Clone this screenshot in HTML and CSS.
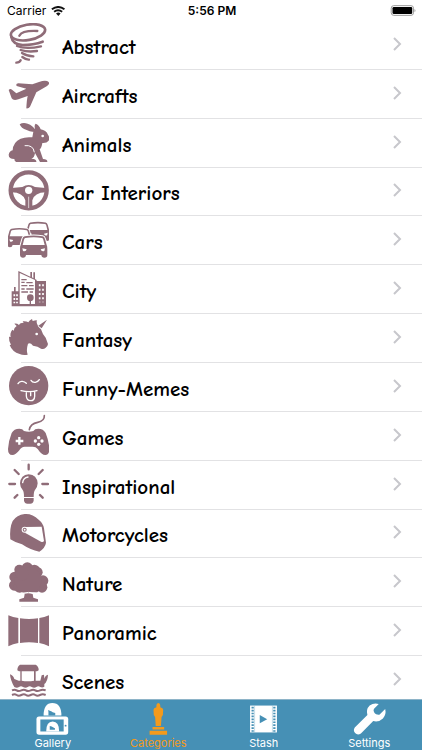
FILE: index.html
```html
<!DOCTYPE html>
<html lang="en">
<head>
<meta charset="utf-8">
<meta name="viewport" content="width=device-width, initial-scale=1">
<title>Categories</title>
<link rel="stylesheet" href="styles.css">
</head>
<body>
<header class="status">
  <div class="status-left"><span>Carrier</span>
    <svg class="wifi" viewBox="153 16 42 31" aria-hidden="true"><g fill="none" stroke="#111" stroke-width="6"><path d="M155 26q20-14 39 0"/><path d="M162 34q12-9 25 0"/></g><path fill="#111" d="M168 39q7-5 14 0l-7 8z"/></svg>
  </div>
  <div class="status-time">5:56 PM</div>
  <div class="status-right">
    <svg class="battery" viewBox="326 14 80 34" aria-hidden="true"><rect x="328" y="16" width="69" height="30" rx="8" fill="none" stroke="#999" stroke-width="3"/><rect x="332" y="20" width="61" height="22" rx="4"/><path d="M400 26q6 5 0 10z" fill="#999"/></svg>
  </div>
</header>
<main class="content">
<ul class="list">
  <li><a class="row" href="#abstract">
    <svg class="icon" viewBox="24 70 123 123"><g fill="none" stroke="currentColor" stroke-linecap="round"><ellipse cx="84" cy="98" rx="52" ry="23" transform="rotate(-10 84 98)" stroke-width="8"/><path d="M58 108q8-16 54-14" stroke-width="7"/><path d="M34 112q4 22 34 24 32 0 60-10" stroke-width="8"/><path d="M51 139q26 11 72 1M62 151q22 7 49 3M66 160q14 9 34 10M67 172q12 9 20 8M62 182q-3 7-13 7" stroke-width="7"/></g></svg>
    <span class="name">Abstract</span><svg class="chevron" viewBox="0 0 9 14"><path d="M1 1l6 6-6 6"/></svg></a></li>
  <li><a class="row" href="#aircrafts">
    <svg class="icon" viewBox="24 216 123 123"><path fill="currentColor" d="M26 270q5-5 10-1l13 11 30-14-29-8q-4-7 5-8l42 3 20-7q21-7 29 0 4 7-6 13l-31 18-19 43q-4 6-11 5 1-24 4-37l-28 10q-15 5-20-3z"/></svg>
    <span class="name">Aircrafts</span><svg class="chevron" viewBox="0 0 9 14"><path d="M1 1l6 6-6 6"/></svg></a></li>
  <li><a class="row" href="#animals">
    <svg class="icon" viewBox="24 9 123 123"><path fill="currentColor" d="M59 19q10-7 24-2 16 6 22 17-3-14 2-17 10 3 15 17 16 3 22 16 6 9 2 18-6 8-19 7-2 15-8 19l10 29q14 1 13 9h-22l-15-27q-2 15-11 17 16 0 15 10H49q-6-2-6-9-17 0-17-13 2-11 12-13 1-25 24-35 14-6 35-4l3-17q-9 1-20-5-17-5-21-17z"/><circle cx="128" cy="54" r="4" fill="#fff"/><path d="M74 83q26-3 29 20" fill="none" stroke="#fff" stroke-width="3"/></svg>
    <span class="name">Animals</span><svg class="chevron" viewBox="0 0 9 14"><path d="M1 1l6 6-6 6"/></svg></a></li>
  <li><a class="row" href="#car-interiors">
    <svg class="icon" viewBox="24 156 123 123"><circle cx="86" cy="217" r="54" fill="none" stroke="currentColor" stroke-width="13"/><path fill="currentColor" d="M35 210l32-3q19-12 38 0l32 3v13q-34 1-40 24v20H76v-20q-7-23-41-24z"/><circle cx="86" cy="217" r="11" fill="#fff"/><path d="M86 236v34" stroke="#fff" stroke-width="2"/></svg>
    <span class="name">Car Interiors</span><svg class="chevron" viewBox="0 0 9 14"><path d="M1 1l6 6-6 6"/></svg></a></li>
  <li><a class="row" href="#cars">
    <svg class="icon" viewBox="24 8 123 123"><defs><g id="car"><path class="car-body" d="M74 60q27-5 54 0 5 1 7 8l5 18q2 3 2 12v18q0 8-9 8-8 0-9-8H78q-1 8-9 8t-9-8V98q0-9 2-12l5-18q2-7 7-8z"/><path fill="#fff" d="M76 65q25-4 50 0 3 1 4 5l4 16H68l4-16q1-4 4-5z"/><path fill="#fff" d="M67 96l13 3q-2 8-11 5zM135 96l-13 3q2 8 11 5z"/></g></defs><g transform="translate(27 -33) scale(.86)"><use href="#car"/></g><g transform="translate(-30 -15) scale(.87)"><use href="#car"/></g><use href="#car"/></svg>
    <span class="name">Cars</span><svg class="chevron" viewBox="0 0 9 14"><path d="M1 1l6 6-6 6"/></svg></a></li>
  <li><a class="row" href="#city">
    <svg class="icon" viewBox="24 155 123 123"><path fill="currentColor" d="M35 225h7v-13h5v13h8v-61l36 17v-14h5v16l4 3v-18h5v20l5 3v3h28v76H35z"/><path fill="#fff" d="M59 170l46 21v72H59z"/><path stroke="currentColor" stroke-width="4" d="M64 190h16M64 198h10M79 199h19M64 208h18M87 208h14M64 218h10M79 218h22M64 227h20M89 227h10M91 240v25"/><circle cx="91" cy="244" r="10" fill="currentColor"/><path stroke="#fff" stroke-width="5" stroke-dasharray="6 7" d="M119 204v54M129 204v54"/><path stroke="#fff" stroke-width="5" stroke-dasharray="6 5" d="M43 234v27M51 234v27"/></svg>
    <span class="name">City</span><svg class="chevron" viewBox="0 0 9 14"><path d="M1 1l6 6-6 6"/></svg></a></li>
  <li><a class="row" href="#fantasy">
    <svg class="icon" viewBox="24 7 123 123"><path fill="currentColor" d="M141 15l-16 26-10-8zM110 16q-2 10 5 20l8 8q4 14 14 25l7 19q-1 8-7 11-6 6-14 3-9-8-24-9-8-10-15-6-6 20-1 33-15 2-24-2-22-6-30-27l4-1q-7-11-6-24l5 1q-3-12 5-22l4 3q1-9 9-14l-7-7q8-1 14 4 3-7 14-7l-3-4q11-1 17 3 3-6 11-10l2 6q5-2 15-3z"/><circle cx="110" cy="58" r="4" fill="#fff"/></svg>
    <span class="name">Fantasy</span><svg class="chevron" viewBox="0 0 9 14"><path d="M1 1l6 6-6 6"/></svg></a></li>
  <li><a class="row" href="#funny-memes">
    <svg class="icon" viewBox="24 154 123 123"><circle cx="86" cy="216" r="59" fill="currentColor"/><g fill="none" stroke="#fff" stroke-width="4" stroke-linecap="round"><path d="M54 210q4-8 13-7 7 1 12 6M93 200q4 7 13 6 8-1 12-8M63 231q25 6 48 0M79 234v13q1 14 13 14 11 0 12-13v-14M92 236v10"/></g></svg>
    <span class="name">Funny-Memes</span><svg class="chevron" viewBox="0 0 9 14"><path d="M1 1l6 6-6 6"/></svg></a></li>
  <li><a class="row" href="#games">
    <svg class="icon" viewBox="24 7 123 123"><path d="M133 12q1 16-20 20-22 4-25 22" fill="none" stroke="currentColor" stroke-width="5" stroke-linecap="round"/><path fill="currentColor" d="M35 64q7-13 23-13 10 0 14 7 14 4 28 0 4-7 15-7 15 0 22 13 10 25 11 48 0 18-12 18-11 0-23-18-5-7-15-7H74q-10 0-16 11-11 14-21 14-13 0-13-18 2-26 11-48z"/><path d="M58 76v23M47 88h23" stroke="#fff" stroke-width="7"/><g fill="#fff"><circle cx="116" cy="78" r="5"/><circle cx="116" cy="98" r="5"/><circle cx="106" cy="88" r="5"/><circle cx="126" cy="88" r="5"/></g></svg>
    <span class="name">Games</span><svg class="chevron" viewBox="0 0 9 14"><path d="M1 1l6 6-6 6"/></svg></a></li>
  <li><a class="row" href="#inspirational">
    <svg class="icon" viewBox="24 153 123 123"><path stroke="currentColor" stroke-width="7" stroke-linecap="round" d="M86 158v14M28 216h17M127 216h17M44 174l12 12M128 174l-12 12M44 257l8-8M128 257l-8-8"/><path fill="currentColor" d="M86 187q25 2 27 27 0 10-8 20-4 5-4 21H72q0-16-4-21-8-10-8-20 2-25 26-27zM72 258h29v8q-2 9-10 9h-9q-8 0-10-9z"/><path d="M68 212q2-15 16-17" fill="none" stroke="#fff" stroke-width="4" stroke-linecap="round"/></svg>
    <span class="name">Inspirational</span><svg class="chevron" viewBox="0 0 9 14"><path d="M1 1l6 6-6 6"/></svg></a></li>
  <li><a class="row" href="#motorcycles">
    <svg class="icon" viewBox="24 6 123 123"><path fill="currentColor" d="M31 88q-3-34 7-55 12-18 36-21 23-2 42 17 13 9 16 26l6 43q-2 15-20 27-27-5-52-22-20-5-35-15z"/><path fill="#fff" d="M77 51l48-1 7 43q-3 5-9 2L76 69z"/><circle cx="74" cy="59" r="9" fill="#fff"/><circle cx="74" cy="59" r="6" fill="currentColor"/><circle cx="74" cy="59" r="3" fill="#fff"/></svg>
    <span class="name">Motorcycles</span><svg class="chevron" viewBox="0 0 9 14"><path d="M1 1l6 6-6 6"/></svg></a></li>
  <li><a class="row" href="#nature">
    <svg class="icon" viewBox="24 152 123 123"><g fill="currentColor"><circle cx="82" cy="173" r="17"/><circle cx="58" cy="178" r="15"/><circle cx="103" cy="180" r="17"/><circle cx="44" cy="200" r="16"/><circle cx="43" cy="225" r="16"/><circle cx="112" cy="186" r="16"/><circle cx="129" cy="211" r="16"/><circle cx="126" cy="231" r="16"/><circle cx="59" cy="229" r="18"/><circle cx="105" cy="229" r="18"/><circle cx="84" cy="210" r="40"/><circle cx="67" cy="190" r="20"/><path d="M74 251h24l2 11 14 5v7H58v-7l14-5z"/></g><path d="M63 249q22-5 47-1" stroke="#fff" stroke-width="3" fill="none"/></svg>
    <span class="name">Nature</span><svg class="chevron" viewBox="0 0 9 14"><path d="M1 1l6 6-6 6"/></svg></a></li>
  <li><a class="row" href="#panoramic">
    <svg class="icon" viewBox="24 11 123 123"><path fill="currentColor" d="M25 27q14 6 30 8v75q-16 3-30 10zM60 36q27 4 54 0v74q-27-5-54 0zM118 35q15-2 29-8v93q-14-7-29-10z"/></svg>
    <span class="name">Panoramic</span><svg class="chevron" viewBox="0 0 9 14"><path d="M1 1l6 6-6 6"/></svg></a></li>
  <li><a class="row" href="#scenes">
    <svg class="icon" viewBox="24 157 123 123"><path fill="currentColor" d="M60 174h47q10 6 9 17l-5 3h-4v28h14l4-16 7-2 1 12q3-11 11-12-1 20-11 28v8q-6 4-12 1-6-4-12 0t-14 0q-6-4-12 0t-14 0q-6-4-12 0t-14 0q-12-20-13-38 10 3 13 14l13 5h5v-28h-4l-5-3q0-12 8-17z"/><path fill="#fff" d="M65 194h37v28q-19 4-37 0z"/><path d="M36 251q8-4 14 0t14 0 14 0 14 0 14 0 14 0 17 0M36 265q8-4 14 0t14 0 14 0 14 0 14 0 14 0 17 0" fill="none" stroke="currentColor" stroke-width="6"/></svg>
    <span class="name">Scenes</span><svg class="chevron" viewBox="0 0 9 14"><path d="M1 1l6 6-6 6"/></svg></a></li>
</ul>
</main>
<nav class="tabs">
  <a class="tab" href="#gallery"><svg class="tab-icon" viewBox="107 24 105 105"><path fill="currentColor" d="M132 66q0-39 27-39 28 0 28 39z"/><path fill="#4690b5" d="M147 66V55l-1-6 7 3 4 1 3 3 8 2v8z"/><rect x="110" y="69" width="98" height="56" rx="8" fill="currentColor"/><rect x="122" y="78" width="72" height="37" fill="#4690b5"/><path fill="currentColor" d="M140 115q0-31 20-31t20 31z"/><path fill="#4690b5" d="M151 110V98l6 2 4 2 6 3v5z"/><circle cx="200" cy="97" r="3" fill="#4690b5"/></svg><span>Gallery</span></a>
  <a class="tab active" href="#categories" aria-current="page"><svg class="tab-icon" viewBox="422 24 105 105"><path fill="currentColor" d="M468 35q0-8 6-8t6 8v5q9 2 9 8l-1 16-4 6-2 28h-16l-2-28-4-6-1-16q0-6 9-8zM456 101h36v8h-36zM447 113h54v12h-54z"/></svg><span>Categories</span></a>
  <a class="tab" href="#stash"><svg class="tab-icon" viewBox="106 22 105 105"><path fill="currentColor" d="M117 33h83v83h-83z"/><path fill="none" stroke="#4690b5" stroke-width="7" stroke-dasharray="5 4" d="M125 37v77M192 37v77"/><path fill="none" stroke="#4690b5" stroke-width="1" d="M131 34v81M186 34v81"/><path fill="#4690b5" d="M147 62l23 13-23 13z"/></svg><span>Stash</span></a>
  <a class="tab" href="#settings"><svg class="tab-icon" viewBox="422 23 105 105"><path fill="currentColor" d="M503 29q-15-5-28 5-12 12-7 29l-39 39q-6 9 1 17 8 8 18 1l38-38q18 4 30-8 11-12 7-29l-18 17q-11 1-15-5-5-7-2-12z"/></svg><span>Settings</span></a>
</nav>
</body>
</html>
```
FILE: styles.css
```css
* { box-sizing: border-box; }
body {
  margin: 0;
  height: 100vh;
  display: flex;
  flex-direction: column;
  background: #fff;
  color: #000;
  font-family: Inter, "Liberation Sans", sans-serif;
}
a { color: inherit; text-decoration: none; }
.status {
  flex: none;
  display: grid;
  grid-template-columns: 1fr auto 1fr;
  align-items: center;
  height: 21px;
  padding: 0 5px 0 7px;
  font-size: 12px;
}
.status-left { display: flex; align-items: center; gap: 5px; }
.status-time { font-weight: 600; }
.status-right { display: flex; justify-content: flex-end; }
.wifi { width: 14px; height: 10px; }
.battery { width: 27px; height: 11px; }
.content { flex: 1; min-height: 0; overflow: hidden; }
.list {
  display: grid;
  grid-auto-rows: 1fr;
  height: 684px;
  margin: 0;
  padding: 0;
  list-style: none;
}
.list li { position: relative; }
.row {
  display: flex;
  align-items: center;
  height: 100%;
  padding: 0 20px 3px 8px;
}
.row::after {
  content: "";
  position: absolute;
  left: 21px;
  right: 0;
  bottom: 0;
  height: 1px;
  background: #e2e2e4;
}
.icon { flex: none; width: 41px; height: 41px; color: #8f6c78; }
.car-body {
  fill: currentColor;
  stroke: #fff;
  stroke-width: 6;
  paint-order: stroke;
}
.name {
  flex: 1;
  padding: 6px 0 0 13px;
  font-family: "Chalkboard SE", "Comic Neue", Lato, sans-serif;
  font-size: 21px;
  font-weight: 600;
  line-height: 24px;
}
.chevron {
  width: 9px;
  height: 14px;
  fill: none;
  stroke: #c7c7cc;
  stroke-width: 2;
}
.tabs {
  flex: none;
  display: flex;
  height: 51px;
  background: #4690b5;
  border-top: 1px solid #8eb4c8;
  color: #fff;
}
.tab {
  flex: 1;
  display: flex;
  flex-direction: column;
  align-items: center;
  padding-top: 2px;
  font-size: 11px;
  line-height: 14px;
}
.tab.active { color: #f39a1c; }
.tab-icon { width: 35px; height: 35px; }
```
